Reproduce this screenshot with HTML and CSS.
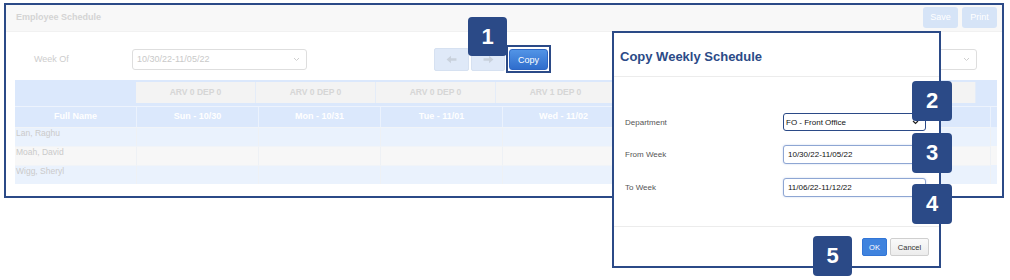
FILE: index.html
```html
<!DOCTYPE html>
<html lang="en">
  <head>
    <meta charset="UTF-8" />
    <meta name="viewport" content="width=device-width, initial-scale=1.0" />
    <title>Employee Schedule</title>
    <link rel="stylesheet" href="styles.css">
  </head>
  <body>
    <div class="frame">
      <div class="topbar">
        <span class="topbar-title">Employee Schedule</span>
        <div class="topbar-actions">
          <button class="btn-faded">Save</button>
          <button class="btn-faded">Print</button>
        </div>
      </div>

      <div class="toolbar">
        <span class="week-label">Week Of</span>
        <div class="fake-select week-select">
          <span>10/30/22-11/05/22</span>
          <svg width="7" height="5" viewBox="0 0 7 5"><path d="M1 1 L3.5 3.5 L6 1" fill="none" stroke="#cfcfcf" stroke-width="1"/></svg>
        </div>
        <button class="arrow-btn arrow-prev">
          <svg width="11" height="9" viewBox="0 0 10 8"><path d="M0.5 4 L4.5 0.5 V2.8 H9.5 V5.2 H4.5 V7.5 Z" fill="#c9d1dc"/></svg>
        </button>
        <button class="arrow-btn arrow-next">
          <svg width="11" height="9" viewBox="0 0 10 8"><path d="M9.5 4 L5.5 0.5 V2.8 H0.5 V5.2 H5.5 V7.5 Z" fill="#c9d1dc"/></svg>
        </button>
        <div class="copy-mark">
          <button class="copy-btn">Copy</button>
        </div>
        <!-- department filter, mostly hidden by the dialog -->
        <div class="fake-select dept-filter">
          <span></span>
          <svg width="7" height="5" viewBox="0 0 7 5"><path d="M1 1 L3.5 3.5 L6 1" fill="none" stroke="#cfcfcf" stroke-width="1"/></svg>
        </div>
      </div>

      <div class="schedule">
        <div class="schedule-head">
          <div class="arv-row">
            <div></div>
            <div class="arv-cell">ARV 0 DEP 0</div>
            <div class="arv-cell">ARV 0 DEP 0</div>
            <div class="arv-cell">ARV 0 DEP 0</div>
            <div class="arv-cell">ARV 1 DEP 0</div>
            <div class="arv-cell"></div>
            <div class="arv-cell"></div>
            <div class="arv-cell"></div>
            <div></div>
          </div>
          <!-- Thu / Fri headers sit under the dialog -->
          <div class="day-row">
            <div class="day-cell">Full Name</div>
            <div class="day-cell">Sun - 10/30</div>
            <div class="day-cell">Mon - 10/31</div>
            <div class="day-cell">Tue - 11/01</div>
            <div class="day-cell">Wed - 11/02</div>
            <div class="day-cell"></div>
            <div class="day-cell"></div>
            <div class="day-cell">Sat - 11/05</div>
            <div></div>
          </div>
        </div>
        <div class="emp-row">
          <div class="emp-cell name">Lan, Raghu</div>
          <div class="emp-cell"></div><div class="emp-cell"></div><div class="emp-cell"></div><div class="emp-cell"></div>
          <div class="emp-cell"></div><div class="emp-cell"></div><div class="emp-cell"></div><div></div>
        </div>
        <div class="emp-row alt">
          <div class="emp-cell name">Moah, David</div>
          <div class="emp-cell"></div><div class="emp-cell"></div><div class="emp-cell"></div><div class="emp-cell"></div>
          <div class="emp-cell"></div><div class="emp-cell"></div><div class="emp-cell"></div><div></div>
        </div>
        <div class="emp-row">
          <div class="emp-cell name">Wigg, Sheryl</div>
          <div class="emp-cell"></div><div class="emp-cell"></div><div class="emp-cell"></div><div class="emp-cell"></div>
          <div class="emp-cell"></div><div class="emp-cell"></div><div class="emp-cell"></div><div></div>
        </div>
      </div>
    </div>

    <!-- dialog on top of the faded page -->
    <div class="modal">
      <div class="modal-header">
        <h2>Copy Weekly Schedule</h2>
      </div>
      <div class="modal-body">
        <div class="form-row">
          <span class="form-label">Department</span>
          <div class="fake-select dept-select">
            <span>FO - Front Office</span>
            <svg width="7" height="5" viewBox="0 0 7 5"><path d="M1 1 L3.5 3.5 L6 1" fill="none" stroke="#222" stroke-width="1.2"/></svg>
          </div>
        </div>
        <div class="form-row">
          <span class="form-label">From Week</span>
          <input class="week-input" type="text" value="10/30/22-11/05/22" />
        </div>
        <div class="form-row">
          <span class="form-label">To Week</span>
          <input class="week-input" type="text" value="11/06/22-11/12/22" />
        </div>
      </div>
      <div class="modal-footer">
        <button class="btn-ok">OK</button>
        <button class="btn-cancel">Cancel</button>
      </div>
    </div>

    <div class="badge badge-1">1</div>
    <div class="badge badge-2">2</div>
    <div class="badge badge-3">3</div>
    <div class="badge badge-4">4</div>
    <div class="badge badge-5">5</div>
  </body>
</html>
```

FILE: styles.css
```css
/* Base */
body {
  margin: 0;
  background-color: #fff;
  font-family: "Liberation Sans", Arial, sans-serif;
  color: #333;
}

button {
  font-family: inherit;
  cursor: pointer;
}

/* Outer frame (faded page behind the dialog) */
.frame {
  margin: 3px 0 0 4px;
  width: 1000px;
  height: 195px;
  box-sizing: border-box;
  border: 2px solid #2b4a87;
}

.topbar {
  height: 27px;
  box-sizing: border-box;
  padding: 0 5px 2px 10px;
  background-color: #f8f8f8;
  border-bottom: 1px solid #f1f1f1;
  display: flex;
  align-items: center;
  justify-content: space-between;
}
.topbar-title {
  font-size: 9px;
  font-weight: bold;
  color: #d4d4d4;
}
.topbar-actions {
  display: flex;
  gap: 4px;
}
.btn-faded {
  width: 35px;
  height: 21px;
  padding: 0;
  border: none;
  border-radius: 3px;
  background-color: #d6e4f7;
  color: #fff;
  font-size: 9px;
}

/* Toolbar */
.toolbar {
  display: flex;
  align-items: center;
  padding: 13px 25px 0 28px;
  height: 28px;
}
.week-label {
  width: 98px;
  font-size: 9px;
  color: #cdcdcd;
}
.fake-select {
  display: flex;
  align-items: center;
  justify-content: space-between;
  box-sizing: border-box;
  border: 1px solid #dedede;
  border-radius: 3px;
  background-color: #fff;
  padding: 0 6px 0 4px;
  font-size: 8px;
  color: #c9c9c9;
}
.week-select {
  width: 175px;
  height: 21px;
  font-size: 9px;
}
.dept-filter {
  margin-left: auto;
  width: 177px;
  height: 21px;
}
.arrow-btn {
  height: 23px;
  padding: 0;
  border: 1px solid #d6e1f1;
  border-radius: 2px;
  background-color: #dfe9f8;
  display: flex;
  align-items: center;
  justify-content: center;
}
.arrow-prev {
  width: 35px;
  margin-left: 127px;
}
.arrow-next {
  width: 34px;
  margin-left: 2px;
}
.copy-mark {
  margin-left: 1px;
  padding: 2px 1px 1px;
  border: 2px solid #2b4a87;
  display: flex;
}
.copy-btn {
  width: 39px;
  height: 21px;
  padding: 0;
  border: 1px solid #2d66c4;
  border-radius: 3px;
  background: linear-gradient(#5294e6, #2f6dcc);
  color: #fff;
  font-size: 9px;
}

/* Schedule grid */
.schedule {
  margin: 7px 5px 0 9px;
}
.schedule-head {
  background-color: #dbe8fc;
  padding-top: 2px;
}
.arv-row {
  display: grid;
  grid-template-columns: 121px repeat(7, 120px) 1fr;
  height: 21px;
}
.arv-cell {
  background-color: #f3f3f3;
  border-right: 1px solid #e4ecf8;
  font-size: 8.5px;
  font-weight: bold;
  color: #d6d6d6;
  text-align: center;
  line-height: 21px;
}
.day-row {
  display: grid;
  grid-template-columns: repeat(8, 122px) 1fr;
  height: 21px;
  margin-top: 3px;
  border-top: 1px solid #edf3fd;
  box-sizing: border-box;
}
.day-cell {
  border-right: 1px solid #ebf2fd;
  font-size: 9px;
  font-weight: bold;
  color: #fff;
  text-align: center;
  line-height: 19px;
}
.emp-row {
  display: grid;
  grid-template-columns: repeat(8, 122px) 1fr;
  height: 19px;
  background-color: #eaf2fd;
}
.emp-row.alt {
  background-color: #f7f7f7;
}
.emp-cell {
  border-right: 1px solid #eef1f5;
  border-top: 1px solid #f1f4f8;
}
.emp-cell.name {
  padding-left: 1px;
  font-size: 8.5px;
  line-height: 11px;
  color: #cacaca;
}

/* Copy dialog */
.modal {
  position: absolute;
  left: 612px;
  top: 31px;
  width: 329px;
  height: 237px;
  box-sizing: border-box;
  border: 2px solid #2b4a87;
  background-color: #fff;
}
.modal-header {
  height: 44px;
  box-sizing: border-box;
  padding: 3px 0 0 6px;
  border-bottom: 1px solid #ececec;
  display: flex;
  align-items: center;
}
.modal-header h2 {
  margin: 0;
  font-size: 13px;
  font-weight: bold;
  color: #2b4a87;
}
.modal-body {
  padding: 36px 0 29px 11px;
  display: flex;
  flex-direction: column;
  gap: 14px;
}
.form-row {
  display: flex;
  align-items: center;
}
.form-label {
  width: 158px;
  font-size: 8px;
  color: #555;
}
.dept-select {
  width: 143px;
  height: 18px;
  border-color: #2b4a87;
  padding: 0 6px 0 2px;
  color: #111;
}
.week-input {
  width: 143px;
  height: 19px;
  box-sizing: border-box;
  padding: 0 4px;
  border: 1px solid #8ea6d3;
  border-radius: 3px;
  box-shadow: 0 0 2px rgba(80, 120, 200, 0.35);
  font-family: inherit;
  font-size: 8px;
  color: #111;
  outline: none;
}
.modal-footer {
  border-top: 1px solid #ececec;
  padding: 11px 10px 0 0;
  display: flex;
  justify-content: flex-end;
  gap: 3px;
}
.btn-ok {
  width: 25px;
  height: 18px;
  padding: 0;
  border: 1px solid #3275d6;
  border-radius: 2px;
  background-color: #3f83de;
  color: #fff;
  font-size: 7.5px;
}
.btn-cancel {
  width: 39px;
  height: 18px;
  padding: 0;
  border: 1px solid #cfcfcf;
  border-radius: 2px;
  background: linear-gradient(#fafafa, #ececec);
  color: #333;
  font-size: 7.5px;
}

/* Step markers */
.badge {
  position: absolute;
  width: 40px;
  height: 40px;
  border-radius: 4px;
  background-color: #2b4a87;
  color: #fff;
  font-size: 22px;
  font-weight: bold;
  display: flex;
  align-items: center;
  justify-content: center;
}
.badge-1 { left: 468px; top: 17px; width: 39px; height: 39px; }
.badge-2 { left: 912px; top: 81px; }
.badge-3 { left: 912px; top: 133px; }
.badge-4 { left: 912px; top: 184px; }
.badge-5 { left: 813px; top: 236px; width: 39px; }
```
